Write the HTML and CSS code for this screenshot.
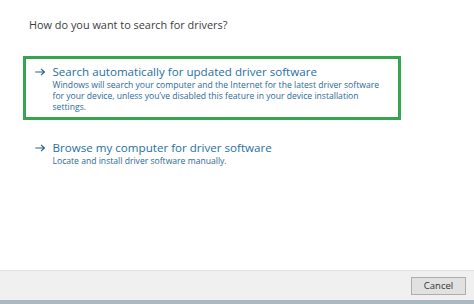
FILE: index.html
```html
<!DOCTYPE html>
<html>
<head>
<meta charset="utf-8">
<link rel="stylesheet" href="styles.css">
</head>
<body>
<div class="dialog">
  <main class="content">
    <h1 class="heading">How do you want to search for drivers?</h1>
    <div class="option selected">
      <div class="opt-title"><svg class="arrow" viewBox="0 0 10 8" width="10" height="8"><path d="M0.3 4H9.4M6 0.8L9.4 4L6 7.2" fill="none" stroke="#2b5f86" stroke-width="1.1"/></svg>Search automatically for updated driver software</div>
      <p class="opt-desc">Windows will search your computer and the Internet for the latest driver software for your device, unless you’ve disabled this feature in your device installation settings.</p>
    </div>
    <div class="option">
      <div class="opt-title"><svg class="arrow" viewBox="0 0 10 8" width="10" height="8"><path d="M0.3 4H9.4M6 0.8L9.4 4L6 7.2" fill="none" stroke="#2b5f86" stroke-width="1.1"/></svg>Browse my computer for driver software</div>
      <p class="opt-desc">Locate and install driver software manually.</p>
    </div>
  </main>
  <footer class="footer">
    <button class="btn">Cancel</button>
  </footer>
  <div class="strip"></div>
</div>
</body>
</html>
```
FILE: styles.css
```css
html, body { margin: 0; padding: 0; }
body { background: #fff; font-family: "Open Sans", "Noto Sans", sans-serif; }
.dialog { width: 474px; height: 304px; display: flex; flex-direction: column; }
.content { flex: 1; padding: 16px 0 0 29px; }
.heading { margin: 0; font-weight: 400; font-size: 10.9px; color: #3c3c3c; line-height: 18px; }
.option { width: 355.5px; margin-left: -6px; padding: 4.5px 8px 4px 8.5px; border: 3.5px solid transparent; }
.option.selected { border-color: #35a552; margin-top: 22px; }
.option + .option { margin-top: 13px; }
.opt-title { font-size: 11.6px; line-height: 16px; color: #26709f; display: flex; align-items: center; }
.arrow { flex: none; margin-right: 8px; }
.opt-desc { margin: 0 0 0 18px; width: 337px; font-size: 8.6px; line-height: 11px; color: #2c6a98; }
.footer { height: 30px; background: #f0f0f0; border-top: 1px solid #e2e2e2; display: flex; justify-content: flex-end; align-items: center; padding-right: 8px; box-sizing: border-box; }
.btn { width: 55px; height: 18px; margin-top: 7px; margin-bottom: 7px; background: #e1e1e1; border: 1px solid #adadad; font-family: inherit; font-size: 9.5px; color: #333; padding: 0; }
.strip { height: 4px; background: #a9b9c2; }
```
